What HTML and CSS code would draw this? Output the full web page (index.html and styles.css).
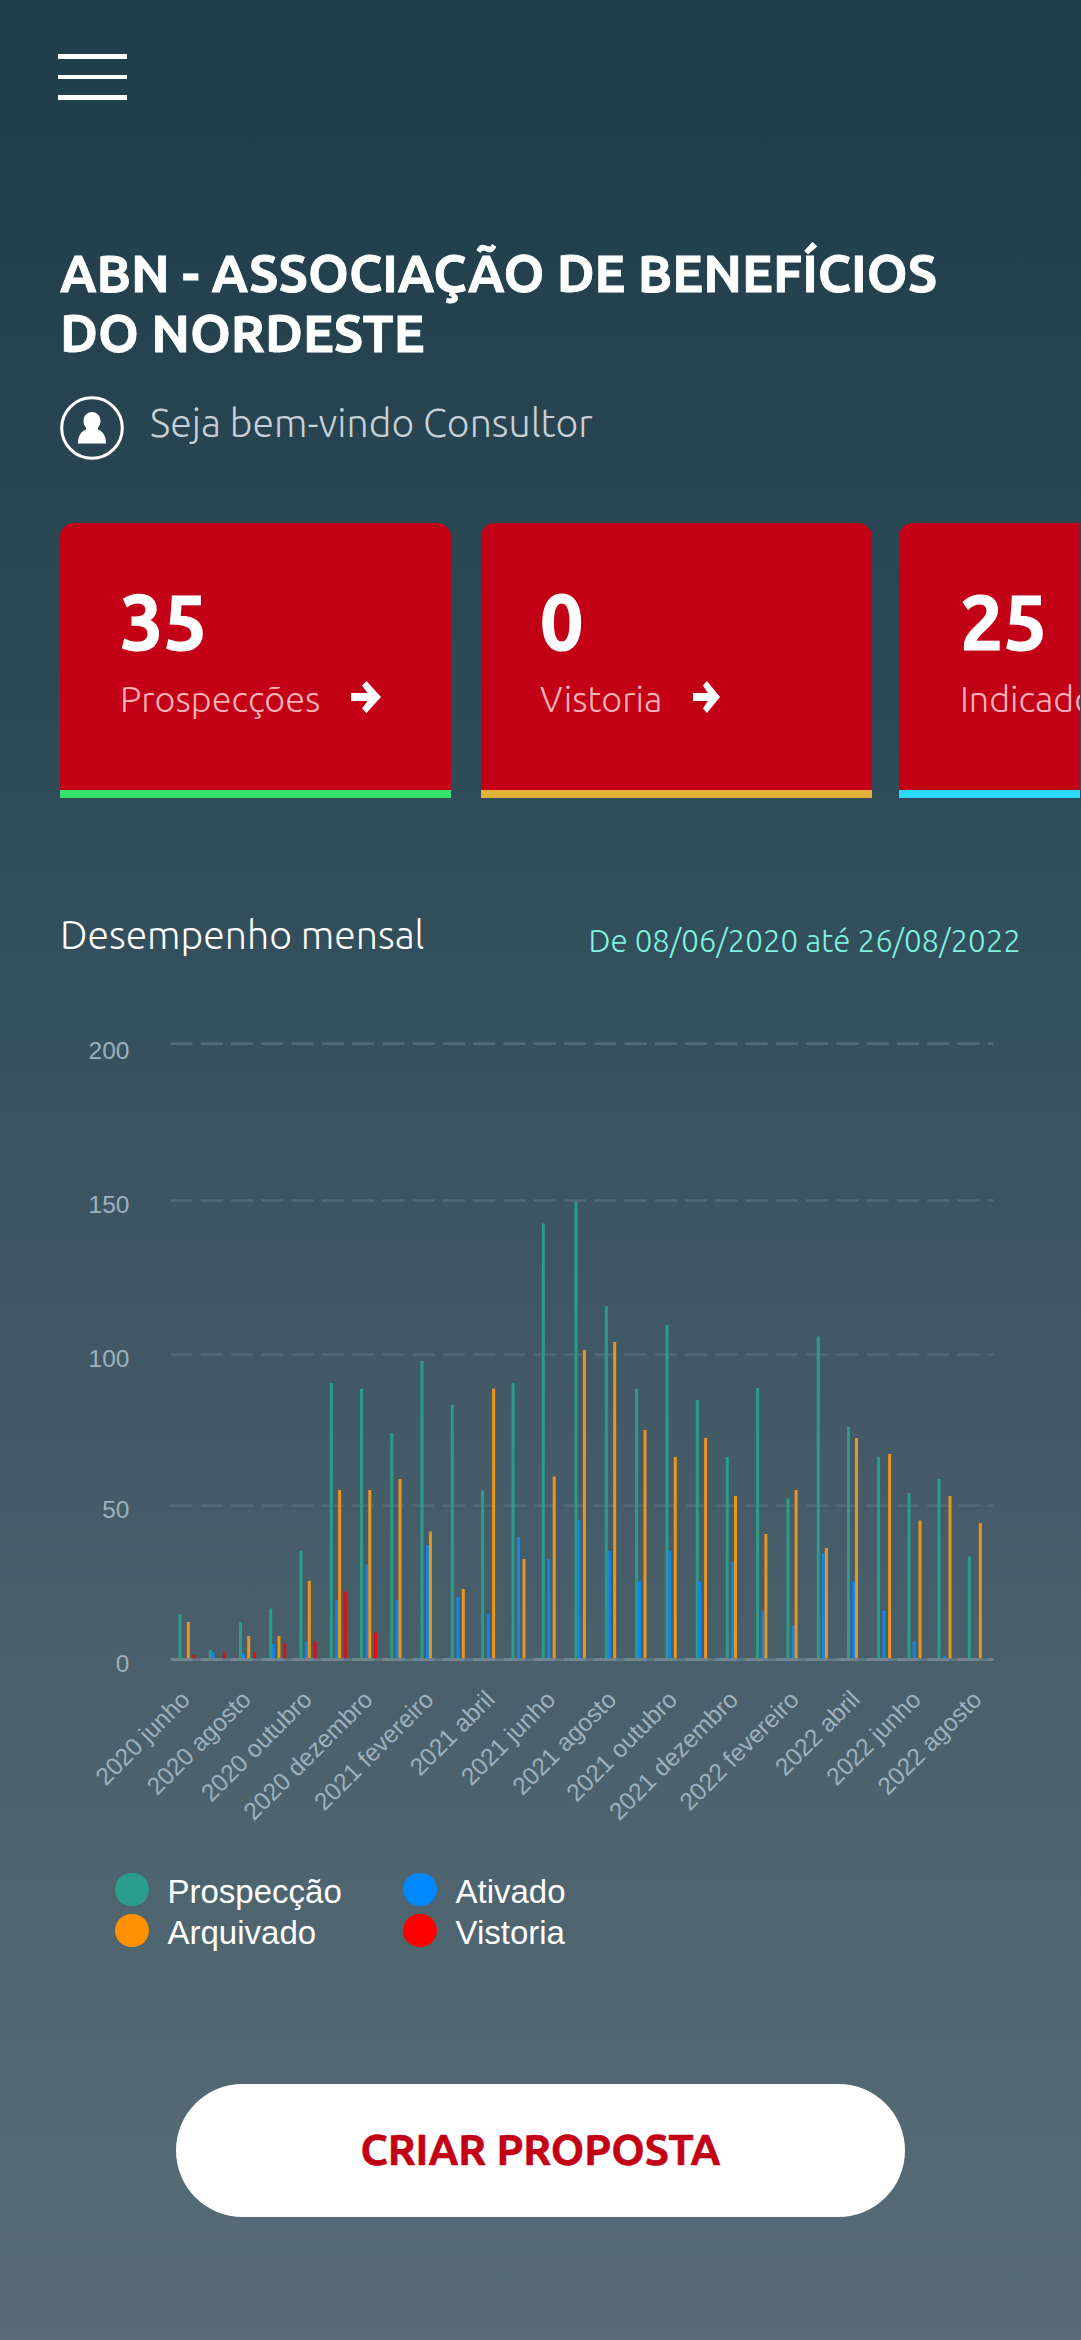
FILE: index.html
```html
<!DOCTYPE html>
<html lang="pt-BR">
<head>
    <meta charset="UTF-8">
    <meta name="viewport" content="width=device-width, initial-scale=1.0">
    <title>ABN - Painel do Consultor</title>
    <link rel="stylesheet" href="styles.css">
</head>
<body>
    <!-- Top Bar -->
    <header class="topbar">
        <button class="menu-button" aria-label="Menu">
            <span></span>
            <span></span>
            <span></span>
        </button>
    </header>

    <!-- Welcome -->
    <section class="welcome">
        <h1>ABN - ASSOCIAÇÃO DE BENEFÍCIOS<br>DO NORDESTE</h1>
        <div class="user">
            <svg class="avatar" viewBox="0 0 64 64">
                <circle cx="32" cy="32" r="30.3" fill="none" stroke="#fff" stroke-width="3"/>
                <path d="M32 16c-5 0-8.5 4-8.5 9 0 3 1 5 2.500 6.500v2C21 35.500 18 40 18 47.500h28C46 40 43 35.500 38 33.500v-2c1.500-1.500 2.500-3.500 2.500-6.500 0-5-3.500-9-8.500-9z" fill="#fff"/>
            </svg>
            <p>Seja bem-vindo Consultor</p>
        </div>
    </section>

    <!-- Cards -->
    <section class="cards">
        <div class="card card-green">
            <strong>35</strong>
            <div class="card-link">
                <span>Prospecções</span>
                <svg class="arrow" viewBox="0 0 30 32" preserveAspectRatio="none">
                    <path d="M0 12h16.500L11 4.500 15.500 0 30 16 15.500 32 11 27.500 16.500 20H0z" fill="#fff"/>
                </svg>
            </div>
        </div>
        <div class="card card-yellow">
            <strong>0</strong>
            <div class="card-link">
                <span>Vistoria</span>
                <svg class="arrow arrow-small" viewBox="0 0 30 32" preserveAspectRatio="none">
                    <path d="M0 12h16.500L11 4.500 15.500 0 30 16 15.500 32 11 27.500 16.500 20H0z" fill="#fff"/>
                </svg>
            </div>
        </div>
        <div class="card card-blue">
            <strong>25</strong>
            <div class="card-link">
                <span>Indicados</span>
            </div>
        </div>
    </section>

    <!-- Monthly Chart -->
    <section class="performance">
        <div class="performance-header">
            <h2>Desempenho mensal</h2>
            <span class="period">De 08/06/2020 até 26/08/2022</span>
        </div>

        <svg class="chart" viewBox="0 1020 1081 830">
            <g class="grid">
                <path d="M170.500 1043.700H993.500M170.500 1200.500H993.500M170.500 1354.500H993.500M170.500 1505.700H993.500"/>
            </g>
            <g class="y-labels">
                <text x="129.500" y="1059">200</text>
                <text x="129.500" y="1213">150</text>
                <text x="129.500" y="1367">100</text>
                <text x="129.500" y="1518">50</text>
                <text x="129.500" y="1672">0</text>
            </g>

            <path class="bars prospeccao" d="M180 1614V1659M210.300 1650V1659M240.500 1622V1659M270.700 1608.500V1659M301 1551V1659M331.300 1383V1659M361.500 1389V1659M391.800 1433V1659M422 1361V1659M452.300 1405V1659M482.600 1490.500V1659M513 1383V1659M543.300 1223.500V1659M576 1201.500V1659M606.300 1306V1659M636.600 1389V1659M667 1325V1659M697.300 1400V1659M727.300 1457V1659M757.600 1388V1659M788 1498.500V1659M818.300 1336.500V1659M848.500 1427V1659M878.600 1457V1659M909 1493V1659M939 1479V1659M969.300 1556.500V1659"/>
            <path class="bars ativado" d="M212.800 1652V1659M243 1653V1659M273.300 1644V1659M306.300 1641.500V1659M336.600 1600V1659M366.800 1564.500V1659M397.200 1600V1659M427.600 1545V1659M458 1597V1659M488.300 1614V1659M518.500 1537V1659M548.700 1559V1659M578.800 1520V1659M609.200 1551V1659M639.400 1581V1659M669.700 1551V1659M699.800 1581V1659M732.700 1561.500V1659M763 1611V1659M793.200 1625V1659M823.400 1553V1659M853.600 1581.500V1659M884 1611V1659M914.300 1641V1659M944.600 1656V1659"/>
            <path class="bars arquivado" d="M188.300 1622V1659M248.700 1636V1659M279 1636V1659M309.300 1581V1659M339.600 1490V1659M369.800 1490V1659M400 1479V1659M430.400 1531.500V1659M463.300 1589V1659M493.600 1388.500V1659M524 1559V1659M554.200 1476.500V1659M584.400 1350V1659M614.700 1342V1659M645 1430V1659M675.300 1457V1659M705.600 1438V1659M735.500 1496V1659M765.900 1534V1659M796.100 1490V1659M826.400 1548V1659M856.500 1438V1659M889.600 1454V1659M920 1520.500V1659M950 1496V1659M980.300 1523V1659"/>
            <path class="bars vistoria" d="M194 1655V1659M224.300 1652V1659M254.400 1652V1659M284.700 1643.500V1659M315 1641.500V1659M345.300 1591.500V1659M375.500 1632.500V1659"/>

            <path class="axis" d="M170.500 1659.700H993.500"/>
            <path class="axis-dash" d="M170.500 1659.700H993.500"/>

            <g class="x-labels">
                <text transform="translate(191.500 1701) rotate(-45)">2020 junho</text>
                <text transform="translate(252.400 1701) rotate(-45)">2020 agosto</text>
                <text transform="translate(313.300 1701) rotate(-45)">2020 outubro</text>
                <text transform="translate(374.200 1701) rotate(-45)">2020 dezembro</text>
                <text transform="translate(435.100 1701) rotate(-45)">2021 fevereiro</text>
                <text transform="translate(496 1701) rotate(-45)">2021 abril</text>
                <text transform="translate(556.900 1701) rotate(-45)">2021 junho</text>
                <text transform="translate(617.800 1701) rotate(-45)">2021 agosto</text>
                <text transform="translate(678.700 1701) rotate(-45)">2021 outubro</text>
                <text transform="translate(739.600 1701) rotate(-45)">2021 dezembro</text>
                <text transform="translate(800.500 1701) rotate(-45)">2022 fevereiro</text>
                <text transform="translate(861.400 1701) rotate(-45)">2022 abril</text>
                <text transform="translate(922.300 1701) rotate(-45)">2022 junho</text>
                <text transform="translate(983.200 1701) rotate(-45)">2022 agosto</text>
            </g>
        </svg>

        <ul class="legend">
            <li><i class="dot dot-prospeccao"></i><span>Prospecção</span></li>
            <li><i class="dot dot-ativado"></i><span>Ativado</span></li>
            <li><i class="dot dot-arquivado"></i><span>Arquivado</span></li>
            <li><i class="dot dot-vistoria"></i><span>Vistoria</span></li>
        </ul>
    </section>

    <button class="create-button">CRIAR PROPOSTA</button>
</body>
</html>
```
FILE: styles.css
```css
* {
    box-sizing: border-box;
    margin: 0;
    padding: 0;
}

body {
    height: 2340px;
    overflow: hidden;
    display: flex;
    flex-direction: column;
    background: linear-gradient(to bottom, #213e4c 0, #223f4d 200px, #294551 480px, #334f5c 950px, #435a66 1400px, #4c636e 1800px, #576c77 2340px);
    color: #fff;
    font-family: "Ubuntu", "Open Sans", "Noto Sans", sans-serif;
}

button {
    border: none;
    cursor: pointer;
    font-family: inherit;
}

/* Top bar */
.topbar {
    height: 243px;
    padding: 54px 58px 0;
}

.menu-button {
    display: flex;
    flex-direction: column;
    gap: 16px;
    background: none;
}

.menu-button span {
    width: 69px;
    height: 4.500px;
    background-color: #fff;
}

/* Welcome */
.welcome {
    height: 280px;
    padding-left: 60px;
}

.welcome h1 {
    font-size: 52px;
    line-height: 60px;
    font-weight: 700;
    white-space: nowrap;
    -webkit-text-stroke: 0.800px #fff;
}

.user {
    display: flex;
    align-items: center;
    margin-top: 33px;
    gap: 26px;
}

.avatar {
    width: 64px;
    height: 64px;
}

.user p {
    padding-bottom: 13px;
    font-size: 39.200px;
    line-height: 50px;
    font-weight: 300;
    color: #c6d2d8;
    white-space: nowrap;
}

/* Cards */
.cards {
    display: flex;
    width: 1080px;
    height: 275px;
    padding-left: 60px;
    overflow: hidden;
}

.card {
    flex: none;
    width: 391px;
    height: 275px;
    margin-right: 30px;
    padding: 58px 0 0 60px;
    background-color: #c20016;
    border-radius: 14px 14px 0 0;
    border-bottom: 8px solid #35e36b;
}

.card-yellow {
    margin-right: 27px;
    padding-left: 59px;
    border-bottom-color: #e2b23a;
}

.card-blue {
    padding-left: 61px;
    border-bottom-color: #2bd9fb;
}

.card strong {
    display: block;
    font-size: 77px;
    line-height: 82px;
    font-weight: 700;
    -webkit-text-stroke: 1.200px #fff;
}

.card-link {
    display: flex;
    align-items: center;
    height: 40px;
    margin-top: 16px;
    font-size: 36px;
    line-height: 40px;
    font-weight: 300;
    color: #ffb3b9;
}

.arrow {
    width: 30px;
    height: 32px;
    margin: -4px 0 0 31px;
}

.arrow-small {
    width: 27px;
}

/* Chart */
.performance-header {
    display: flex;
    justify-content: space-between;
    align-items: flex-start;
    height: 222px;
    padding: 111px 60px 0 60px;
}

.performance-header h2 {
    font-size: 39.200px;
    line-height: 50px;
    font-weight: 300;
}

.period {
    margin-top: 12px;
    font-size: 31.300px;
    line-height: 40px;
    font-weight: 300;
    color: #7ff5e0;
}

.chart {
    display: block;
    width: 1081px;
    height: 830px;
}

.grid path {
    stroke: #536a76;
    stroke-width: 2.700;
    stroke-dasharray: 22 8.270;
}

.bars {
    fill: none;
    stroke-width: 3;
}

.prospeccao {
    stroke: #2a9d8a;
}

.ativado {
    stroke: #0f86e8;
}

.arquivado {
    stroke: #ec951c;
}

.vistoria {
    stroke: #e20d14;
}

.axis {
    stroke: #627985;
    stroke-width: 2.700;
}

.axis-dash {
    stroke: #718791;
    stroke-width: 2.700;
    stroke-dasharray: 22 8.270;
}

.y-labels text, .x-labels text {
    font-family: "Liberation Sans", Arial, sans-serif;
    font-size: 24.500px;
    fill: #9db1bc;
    text-anchor: end;
}

.legend {
    display: grid;
    grid-template-columns: 288px 288px;
    grid-auto-rows: 41px;
    height: 102px;
    padding: 19px 0 0 115px;
    list-style: none;
    font-family: "Liberation Sans", Arial, sans-serif;
    font-size: 33px;
    line-height: 40px;
}

.legend li {
    display: flex;
    align-items: center;
}

.legend span {
    margin: 4px 0 0 19px;
}

.dot {
    width: 33.500px;
    height: 33.500px;
    border-radius: 50%;
}

.dot-prospeccao {
    background-color: #2a9d8f;
}

.dot-ativado {
    background-color: #0088ff;
}

.dot-arquivado {
    background-color: #ff9000;
}

.dot-vistoria {
    background-color: #ff0000;
}

/* Create button */
.create-button {
    flex: none;
    width: 729px;
    height: 133px;
    margin: 132px 0 0 176px;
    padding-bottom: 4px;
    border-radius: 67px;
    background-color: #fff;
    color: #c20016;
    font-size: 42.600px;
    font-weight: 700;
    -webkit-text-stroke: 0.600px #c20016;
}
```
